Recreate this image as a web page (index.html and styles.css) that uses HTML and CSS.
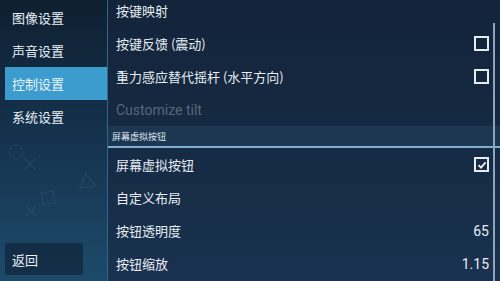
FILE: index.html
```html
<!DOCTYPE html>
<html lang="zh">
<head>
<meta charset="utf-8">
<link rel="stylesheet" href="styles.css">
</head>
<body>
<div class="app">
  <aside class="sidebar">
    <div class="nav-item">图像设置</div>
    <div class="nav-item">声音设置</div>
    <div class="nav-item active">控制设置</div>
    <div class="nav-item">系统设置</div>
    <svg class="deco" width="100" height="90" viewBox="0 0 100 90">
      <g fill="none" stroke="#6f9cc0" stroke-width="1.2" opacity="0.13">
        <circle cx="14" cy="12" r="7"/>
        <path d="M22 18 L34 30 M34 18 L22 30"/>
        <path d="M84 34 L94 46 L78 48 Z"/>
        <rect x="40" y="52" width="12" height="12" transform="rotate(-10 46 58)"/>
        <path d="M24 66 L34 76 M34 66 L24 76"/>
      </g>
    </svg>
    <div class="back">返回</div>
  </aside>
  <main class="main">
    <div class="list">
      <div class="row">按键映射</div>
      <div class="row"><span>按键反馈 (震动)</span><span class="check"></span></div>
      <div class="row"><span>重力感应替代摇杆 (水平方向)</span><span class="check"></span></div>
      <div class="row disabled">Customize tilt</div>
      <div class="section">屏幕虚拟按钮</div>
      <div class="row"><span>屏幕虚拟按钮</span><span class="check checked"><svg width="10" height="10" viewBox="0 0 10 10"><path d="M1.5 5.2 L4 7.6 L8.6 2.4" fill="none" stroke="#eef3f7" stroke-width="1.8"/></svg></span></div>
      <div class="row">自定义布局</div>
      <div class="row"><span>按钮透明度</span><span class="value">65</span></div>
      <div class="row"><span>按钮缩放</span><span class="value">1.15</span></div>
    </div>
    <div class="scrollbar"></div>
  </main>
</div>
</body>
</html>
```

FILE: styles.css
```css
html, body {
  margin: 0;
  padding: 0;
}
body {
  width: 500px;
  height: 281px;
  overflow: hidden;
  font-family: Roboto, "Noto Sans CJK SC", sans-serif;
  color: #e6edf3;
  background: linear-gradient(180deg, #0e1d2e 0%, #13304a 55%, #1c4a6b 100%);
}
.app {
  display: flex;
  height: 281px;
}
.sidebar {
  width: 107px;
  display: flex;
  flex-direction: column;
  padding-top: 1px;
  position: relative;
  background: linear-gradient(180deg, #0f1f31 0%, #15334e 50%, #1d4a6a 100%);
}
.nav-item {
  height: 33px;
  margin-left: 5px;
  padding-left: 7px;
  display: flex;
  align-items: center;
  font-size: 13px;
  font-family: "Noto Sans CJK SC", sans-serif;
  color: #e8eef4;
}
.nav-item.active {
  background: #3c9ccd;
  color: #eaf4fa;
}
.deco {
  position: absolute;
  left: 2px;
  top: 140px;
}
.back {
  margin-top: auto;
  margin-left: 5px;
  margin-bottom: 6px;
  width: 71px;
  height: 32px;
  padding-left: 7px;
  display: flex;
  align-items: center;
  font-size: 13px;
  font-family: "Noto Sans CJK SC", sans-serif;
  background: rgba(18, 38, 60, 0.75);
  border-radius: 3px;
}
.main {
  flex: 1;
  position: relative;
  overflow: hidden;
  border-left: 1px solid #2b6a84;
  background: linear-gradient(180deg, #13243a 0%, #152a43 50%, #1a3250 100%);
}
.list {
  margin-top: -6px;
  display: flex;
  flex-direction: column;
}
.row {
  height: 33px;
  padding-left: 8px;
  padding-right: 11px;
  display: flex;
  align-items: center;
  justify-content: space-between;
  font-size: 13px;
  font-family: "Noto Sans CJK SC", sans-serif;
  color: #e6edf3;
}
.row.disabled {
  font-family: Roboto, sans-serif;
  font-size: 14px;
  color: #56677a;
}
.check {
  width: 11px;
  height: 11px;
  border: 2px solid #e6edf3;
  display: flex;
  align-items: center;
  justify-content: center;
}
.value {
  font-family: Roboto, sans-serif;
  font-size: 14px;
}
.section {
  height: 20px;
  padding-left: 4px;
  display: flex;
  align-items: center;
  font-size: 9px;
  font-family: "Noto Sans CJK SC", sans-serif;
  color: #dfe8f0;
  background: #1d3753;
  border-bottom: 2px solid #7eaecd;
}
.scrollbar {
  position: absolute;
  right: 5px;
  top: 23px;
  bottom: 0;
  width: 2px;
  background: #8ea4b8;
}
```
